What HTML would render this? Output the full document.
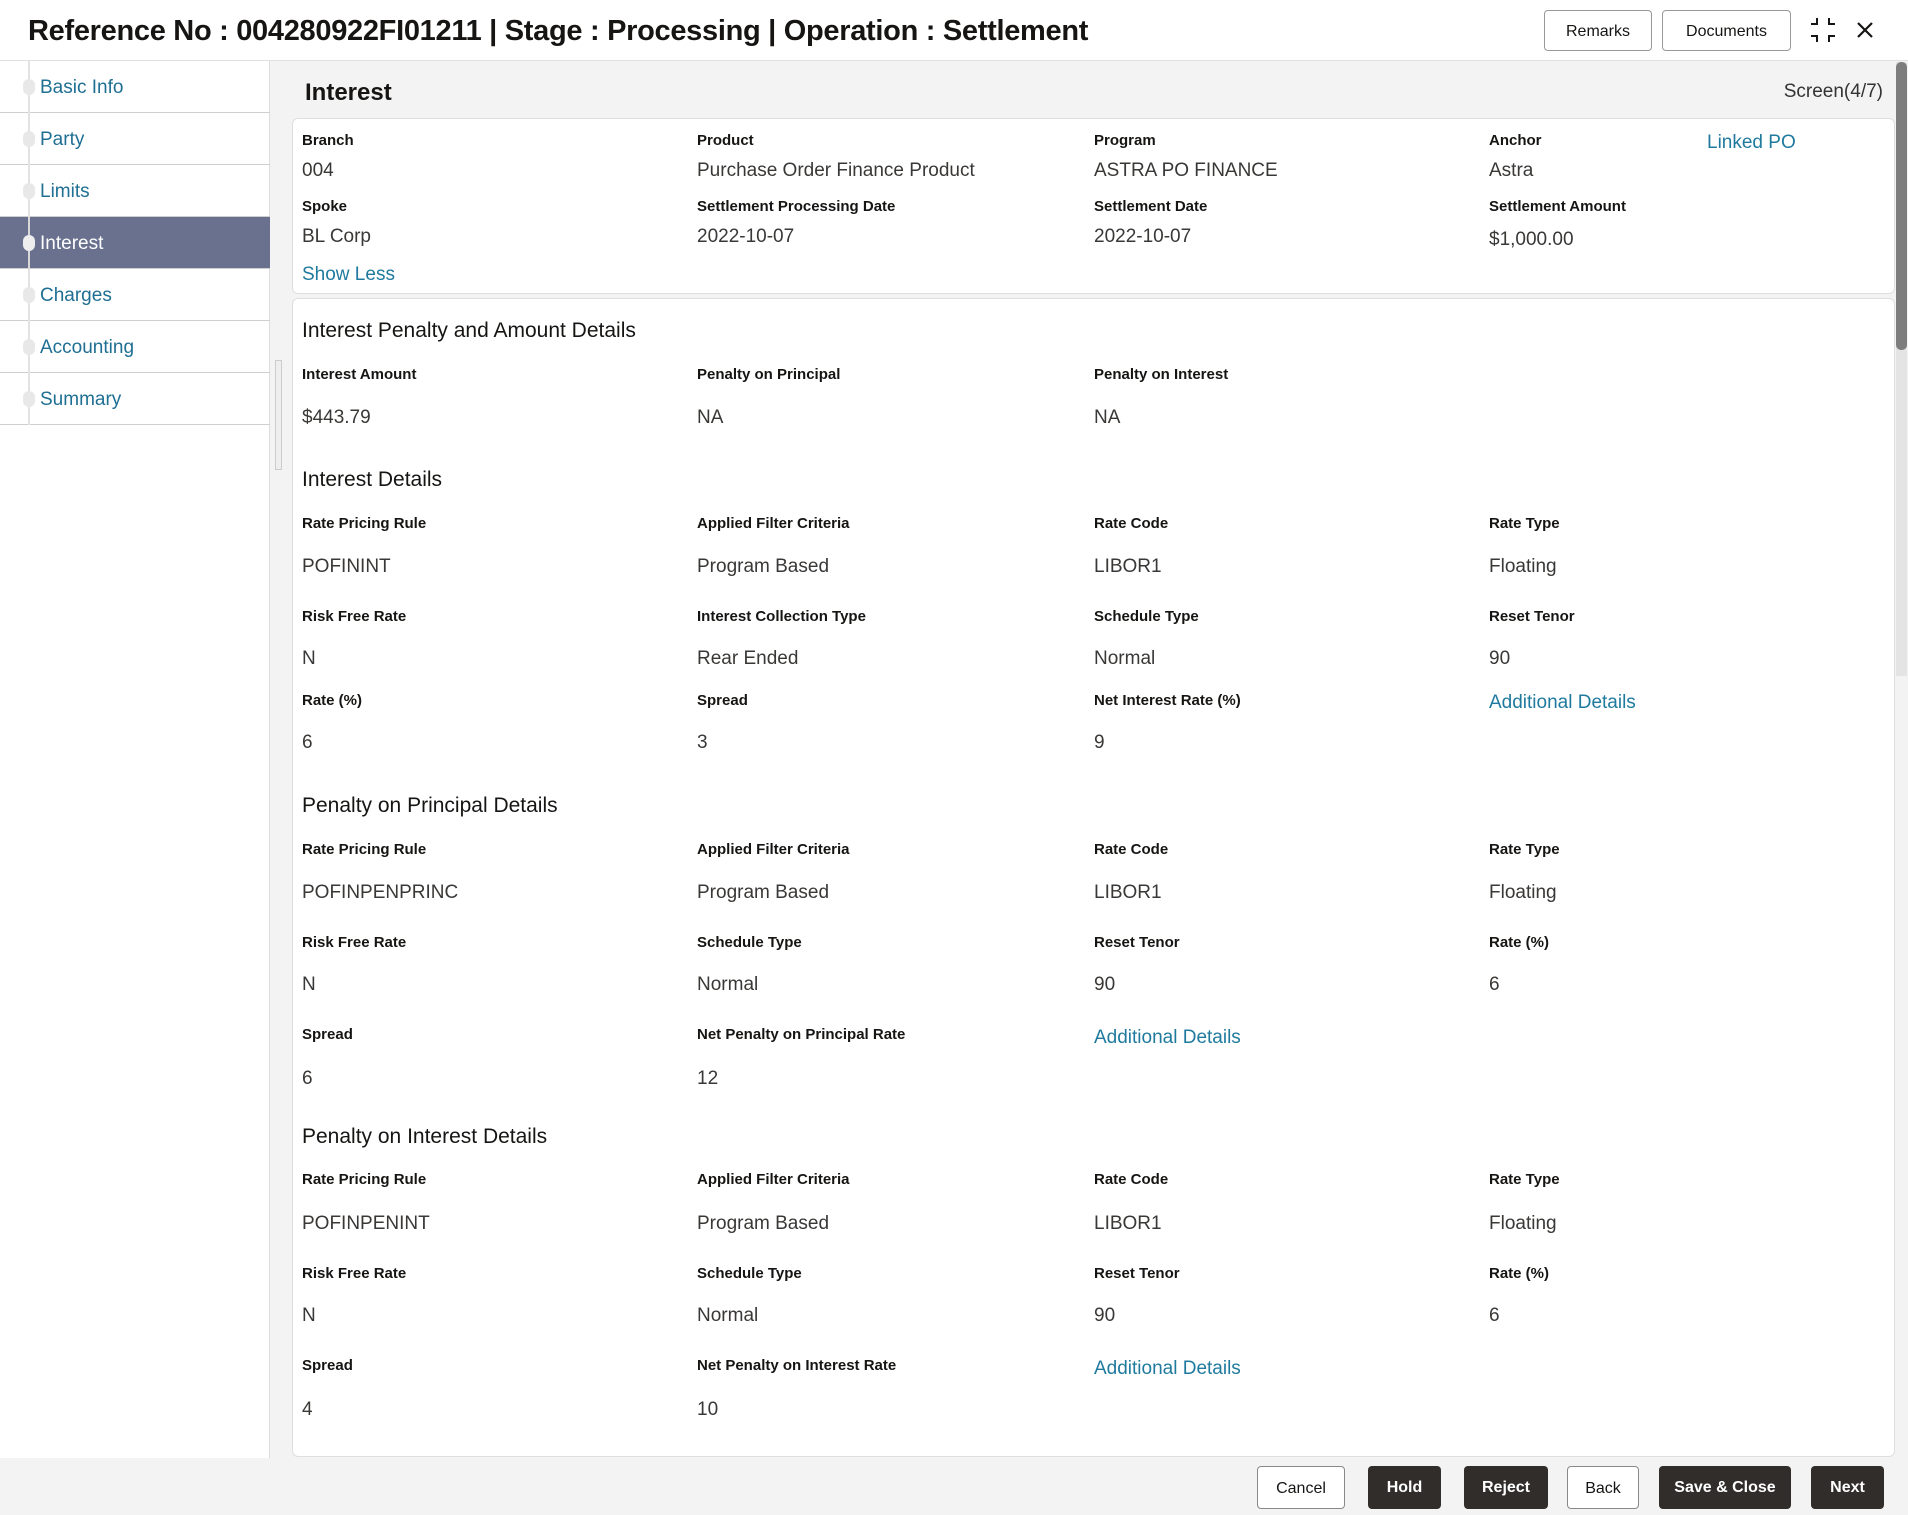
<!DOCTYPE html>
<html><head><meta charset="utf-8"><style>
*{margin:0;padding:0;box-sizing:border-box}
body{width:1908px;height:1515px;position:relative;overflow:hidden;background:#f3f3f3;font-family:"Liberation Sans",sans-serif;color:#161513}
.a{position:absolute;white-space:nowrap}
.l{font-size:15px;font-weight:bold;color:#161513;line-height:18px;margin-top:2px}
.v{font-size:19px;color:#3a3836;line-height:22px;margin-top:2px}
.h{font-size:21px;color:#161513;line-height:26px;margin-top:2px}
.k{font-size:19px;color:#1f7a9e;line-height:22px;margin-top:2px}
.side{position:absolute;left:0;top:61px;width:270px;height:1397px;background:#fff;border-right:1px solid #ddd}
.it{position:absolute;left:0;width:270px;height:52px;border-bottom:1.5px solid #cfcfcf;font-size:19px;color:#1f6f93;line-height:54px;padding-left:40px}
.dot{position:absolute;left:23px;top:18px;width:12px;height:16px;border-radius:6px;background:#e8e8e8}
.ln{position:absolute;left:28px;top:0;width:2px;height:52px;background:#e2e2e2}
.btn{position:absolute;top:1466px;height:43px;border-radius:4px;font-size:16px;font-weight:bold;line-height:43px;text-align:center}
.bw{background:#fff;border:1px solid #8a8886;color:#161513;font-weight:normal}
.bd{background:#312d2a;color:#fff}
.card{position:absolute;left:292px;width:1603px;background:#fff;border:1px solid #dedede;border-radius:6px}
</style></head><body>
<div class="a" style="left:0;top:0;width:1908px;height:61px;background:#fff;border-bottom:1px solid #e0e0e0"></div>
<div class="a" style="left:28px;top:15px;font-size:29px;font-weight:bold;letter-spacing:-0.3px">Reference No : 004280922FI01211 | Stage : Processing | Operation : Settlement</div>
<div class="a" style="left:1544px;top:10px;width:108px;height:41px;border:1px solid #9a9896;border-radius:4px;font-size:16px;text-align:center;line-height:41px">Remarks</div>
<div class="a" style="left:1662px;top:10px;width:129px;height:41px;border:1px solid #9a9896;border-radius:4px;font-size:16px;text-align:center;line-height:41px">Documents</div>
<svg class="a" style="left:1808px;top:16px" width="30" height="28" viewBox="0 0 30 28" fill="none" stroke="#161513" stroke-width="2"><path d="M3 8h6V2M21 2v6h6M3 20h6v6M27 20h-6v6"/></svg>
<svg class="a" style="left:1856px;top:21px" width="18" height="18" viewBox="0 0 18 18" stroke="#161513" stroke-width="2.2"><path d="M2 2L16 16M16 2L2 16"/></svg>

<div class="side">
<div class="it" style="top:0"><div class="ln"></div><div class="dot"></div>Basic Info</div>
<div class="it" style="top:52px"><div class="ln"></div><div class="dot"></div>Party</div>
<div class="it" style="top:104px"><div class="ln"></div><div class="dot"></div>Limits</div>
<div class="it" style="top:156px;background:#69718f;color:#fff"><div class="ln" style="background:#d8d8d8"></div><div class="dot" style="background:#eee"></div>Interest</div>
<div class="it" style="top:208px"><div class="ln"></div><div class="dot"></div>Charges</div>
<div class="it" style="top:260px"><div class="ln"></div><div class="dot"></div>Accounting</div>
<div class="it" style="top:312px"><div class="ln"></div><div class="dot"></div>Summary</div>
</div>
<div class="a" style="left:275px;top:360px;width:7px;height:110px;border:1px solid #ccc;background:#eee"></div>

<div class="a" style="left:305px;top:79px;font-size:24px;font-weight:bold">Interest</div>
<div class="a" style="right:25px;top:81px;font-size:19px;color:#333">Screen(4/7)</div>

<div class="card" style="top:118px;height:176px"></div>
<div class="card" style="top:298px;height:1159px"></div>

<div class="a l" style="left:302px;top:130px">Branch</div>
<div class="a v" style="left:302px;top:158px">004</div>
<div class="a l" style="left:697px;top:130px">Product</div>
<div class="a v" style="left:697px;top:158px">Purchase Order Finance Product</div>
<div class="a l" style="left:1094px;top:130px">Program</div>
<div class="a v" style="left:1094px;top:158px">ASTRA PO FINANCE</div>
<div class="a l" style="left:1489px;top:130px">Anchor</div>
<div class="a v" style="left:1489px;top:158px">Astra</div>
<div class="a k" style="left:1707px;top:130px">Linked PO</div>
<div class="a l" style="left:302px;top:196px">Spoke</div>
<div class="a v" style="left:302px;top:224px">BL Corp</div>
<div class="a l" style="left:697px;top:196px">Settlement Processing Date</div>
<div class="a v" style="left:697px;top:224px">2022-10-07</div>
<div class="a l" style="left:1094px;top:196px">Settlement Date</div>
<div class="a v" style="left:1094px;top:224px">2022-10-07</div>
<div class="a l" style="left:1489px;top:196px">Settlement Amount</div>
<div class="a v" style="left:1489px;top:227px">$1,000.00</div>
<div class="a k" style="left:302px;top:262px">Show Less</div>

<div class="a h" style="left:302px;top:316px">Interest Penalty and Amount Details</div>
<div class="a l" style="left:302px;top:364px">Interest Amount</div>
<div class="a v" style="left:302px;top:405px">$443.79</div>
<div class="a l" style="left:697px;top:364px">Penalty on Principal</div>
<div class="a v" style="left:697px;top:405px">NA</div>
<div class="a l" style="left:1094px;top:364px">Penalty on Interest</div>
<div class="a v" style="left:1094px;top:405px">NA</div>

<div class="a h" style="left:302px;top:465px">Interest Details</div>
<div class="a l" style="left:302px;top:513px">Rate Pricing Rule</div><div class="a v" style="left:302px;top:554px">POFININT</div>
<div class="a l" style="left:697px;top:513px">Applied Filter Criteria</div><div class="a v" style="left:697px;top:554px">Program Based</div>
<div class="a l" style="left:1094px;top:513px">Rate Code</div><div class="a v" style="left:1094px;top:554px">LIBOR1</div>
<div class="a l" style="left:1489px;top:513px">Rate Type</div><div class="a v" style="left:1489px;top:554px">Floating</div>
<div class="a l" style="left:302px;top:606px">Risk Free Rate</div><div class="a v" style="left:302px;top:646px">N</div>
<div class="a l" style="left:697px;top:606px">Interest Collection Type</div><div class="a v" style="left:697px;top:646px">Rear Ended</div>
<div class="a l" style="left:1094px;top:606px">Schedule Type</div><div class="a v" style="left:1094px;top:646px">Normal</div>
<div class="a l" style="left:1489px;top:606px">Reset Tenor</div><div class="a v" style="left:1489px;top:646px">90</div>
<div class="a l" style="left:302px;top:690px">Rate (%)</div><div class="a v" style="left:302px;top:730px">6</div>
<div class="a l" style="left:697px;top:690px">Spread</div><div class="a v" style="left:697px;top:730px">3</div>
<div class="a l" style="left:1094px;top:690px">Net Interest Rate (%)</div><div class="a v" style="left:1094px;top:730px">9</div>
<div class="a k" style="left:1489px;top:690px">Additional Details</div>

<div class="a h" style="left:302px;top:791px">Penalty on Principal Details</div>
<div class="a l" style="left:302px;top:839px">Rate Pricing Rule</div><div class="a v" style="left:302px;top:880px">POFINPENPRINC</div>
<div class="a l" style="left:697px;top:839px">Applied Filter Criteria</div><div class="a v" style="left:697px;top:880px">Program Based</div>
<div class="a l" style="left:1094px;top:839px">Rate Code</div><div class="a v" style="left:1094px;top:880px">LIBOR1</div>
<div class="a l" style="left:1489px;top:839px">Rate Type</div><div class="a v" style="left:1489px;top:880px">Floating</div>
<div class="a l" style="left:302px;top:932px">Risk Free Rate</div><div class="a v" style="left:302px;top:972px">N</div>
<div class="a l" style="left:697px;top:932px">Schedule Type</div><div class="a v" style="left:697px;top:972px">Normal</div>
<div class="a l" style="left:1094px;top:932px">Reset Tenor</div><div class="a v" style="left:1094px;top:972px">90</div>
<div class="a l" style="left:1489px;top:932px">Rate (%)</div><div class="a v" style="left:1489px;top:972px">6</div>
<div class="a l" style="left:302px;top:1024px">Spread</div><div class="a v" style="left:302px;top:1066px">6</div>
<div class="a l" style="left:697px;top:1024px">Net Penalty on Principal Rate</div><div class="a v" style="left:697px;top:1066px">12</div>
<div class="a k" style="left:1094px;top:1025px">Additional Details</div>

<div class="a h" style="left:302px;top:1122px">Penalty on Interest Details</div>
<div class="a l" style="left:302px;top:1169px">Rate Pricing Rule</div><div class="a v" style="left:302px;top:1211px">POFINPENINT</div>
<div class="a l" style="left:697px;top:1169px">Applied Filter Criteria</div><div class="a v" style="left:697px;top:1211px">Program Based</div>
<div class="a l" style="left:1094px;top:1169px">Rate Code</div><div class="a v" style="left:1094px;top:1211px">LIBOR1</div>
<div class="a l" style="left:1489px;top:1169px">Rate Type</div><div class="a v" style="left:1489px;top:1211px">Floating</div>
<div class="a l" style="left:302px;top:1263px">Risk Free Rate</div><div class="a v" style="left:302px;top:1303px">N</div>
<div class="a l" style="left:697px;top:1263px">Schedule Type</div><div class="a v" style="left:697px;top:1303px">Normal</div>
<div class="a l" style="left:1094px;top:1263px">Reset Tenor</div><div class="a v" style="left:1094px;top:1303px">90</div>
<div class="a l" style="left:1489px;top:1263px">Rate (%)</div><div class="a v" style="left:1489px;top:1303px">6</div>
<div class="a l" style="left:302px;top:1355px">Spread</div><div class="a v" style="left:302px;top:1397px">4</div>
<div class="a l" style="left:697px;top:1355px">Net Penalty on Interest Rate</div><div class="a v" style="left:697px;top:1397px">10</div>
<div class="a k" style="left:1094px;top:1356px">Additional Details</div>

<div class="a" style="left:1896px;top:62px;width:11px;height:614px;background:#e4e4e4"></div>
<div class="a" style="left:1896px;top:62px;width:11px;height:288px;background:#7d7d7d;border-radius:5px"></div>

<div class="btn bw" style="left:1257px;width:88px">Cancel</div>
<div class="btn bd" style="left:1368px;width:73px">Hold</div>
<div class="btn bd" style="left:1464px;width:84px">Reject</div>
<div class="btn bw" style="left:1567px;width:72px">Back</div>
<div class="btn bd" style="left:1659px;width:132px">Save &amp; Close</div>
<div class="btn bd" style="left:1811px;width:73px">Next</div>
</body></html>
